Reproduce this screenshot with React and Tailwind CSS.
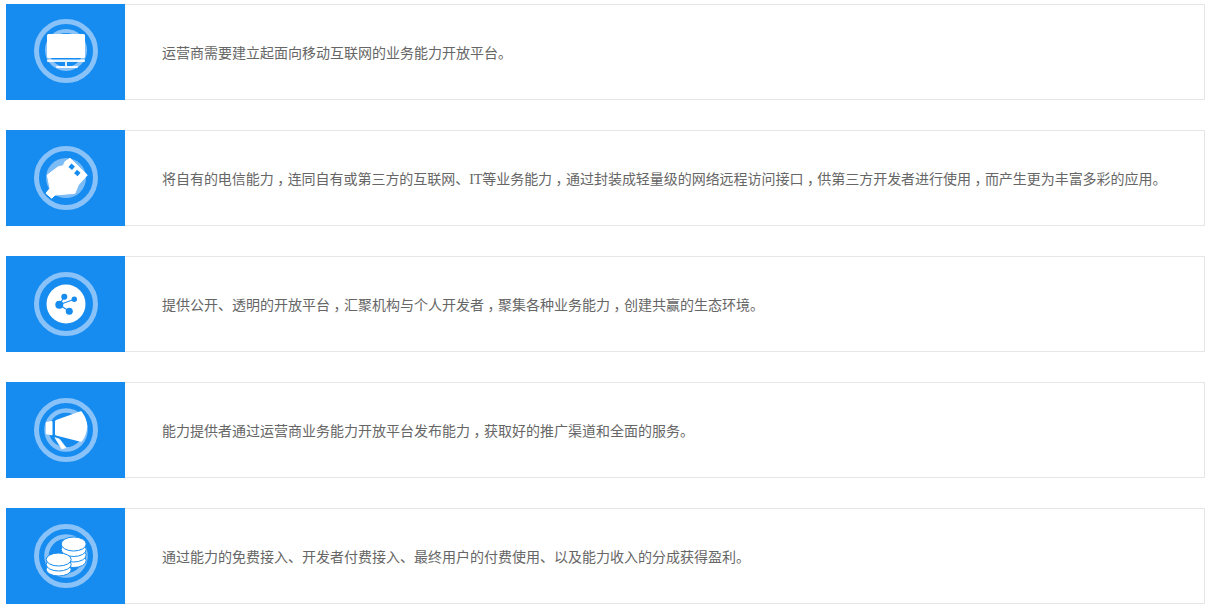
const RING = "#88c2f8";
const BLUE = "#168cf0";

function Ring({ children }) {
  return (
    <svg width="70" height="70" viewBox="0 0 70 70" className="block">
      <circle cx="35" cy="35" r="29.500" fill="none" stroke={RING} strokeWidth="5" />
      {children}
    </svg>
  );
}

const Monitor = () => (
  <Ring>
    <circle cx="35" cy="34" r="19" fill="none" stroke={RING} strokeWidth="4" />
    <path d="M16 19.500q0-1.500 1.500-1.500h35q1.500 0 1.500 1.500v21q0 1.500-1.500 1.500h-35q-1.500 0-1.500-1.500z" fill="#fff" />
    <rect x="16" y="43.500" width="38" height="2.500" rx="1" fill="#fff" opacity="0.9" />
    <rect x="34" y="46" width="2" height="4" fill="#fff" opacity="0.85" />
    <rect x="25" y="50" width="22" height="2" rx="1" fill="#fff" opacity="0.9" />
  </Ring>
);

const Plug = () => (
  <Ring>
    <circle cx="35" cy="35" r="20" fill="#7bbcf7" />
    <path d="M39 15.300L56.300 32 47.300 42 44 50.300 24 52 20.700 55.300 15 50.300 19 45.300 16.300 32 27.300 23.700 32.300 22.700 34 18.700z" fill="#fff" stroke="#fff" strokeWidth="1" strokeLinejoin="round" />
    <rect x="-2.300" y="-2.300" width="4.600" height="4.600" fill={BLUE} transform="translate(40.700 23.700) rotate(40)" />
    <rect x="-2.300" y="-2.300" width="4.600" height="4.600" fill={BLUE} transform="translate(46.300 30) rotate(40)" />
  </Ring>
);

const Share = () => (
  <Ring>
    <circle cx="35" cy="35" r="19.500" fill="#fff" />
    <g stroke={BLUE} strokeWidth="1.200">
      <path d="M28.300 35.700L33.300 27.700M28.300 35.700L43.300 30.300M28.300 35.700L38.300 42.300" />
    </g>
    <g fill={BLUE}>
      <circle cx="33.300" cy="27.700" r="3" />
      <circle cx="43.300" cy="30.300" r="2.700" />
      <circle cx="28.300" cy="35.700" r="4" />
      <circle cx="38.300" cy="42.300" r="3.500" />
    </g>
  </Ring>
);

const Horn = () => (
  <Ring>
    <circle cx="35" cy="35" r="19.500" fill="none" stroke={RING} strokeWidth="4.500" />
    <path d="M24 26.500q0-1 1-1.500L49.500 16.300q1-.3 1.500.7 5 7 5.300 14-.3 8-5.300 15.300-.5.700-1.500.4L25 40.500q-1-.3-1-1.500z" fill="#fff" />
    <path d="M15.500 27l5-1q1 0 1 1v12.500q0 1-1 .8l-5-1q-.7-.2-.7-1V28q0-.8.700-1z" fill="#fff" />
    <path d="M24 42.700l4.500 1.500 6.500 8.500-4.300 1z" fill="#fff" stroke="#fff" strokeWidth="0.800" strokeLinejoin="round" />
  </Ring>
);

function Stack({ x, y, rx, ry, layers, step }) {
  const items = [];
  for (let i = layers - 1; i >= 0; i--) {
    items.push(<ellipse key={i} cx={x} cy={y + i * step} rx={rx} ry={ry} fill="#fff" stroke={BLUE} strokeWidth="1" />);
  }
  return <g>{items}</g>;
}

const Coins = () => (
  <Ring>
    <circle cx="35" cy="35" r="19.500" fill="none" stroke={RING} strokeWidth="4.500" />
    <Stack x={42.700} y={23} rx={12.500} ry={7} layers={4} step={5.500} />
    <Stack x={27.700} y={38.500} rx={12.500} ry={6.500} layers={3} step={5} />
  </Ring>
);

const rows = [
  [Monitor, "运营商需要建立起面向移动互联网的业务能力开放平台。"],
  [Plug, "将自有的电信能力，连同自有或第三方的互联网、IT等业务能力，通过封装成轻量级的网络远程访问接口，供第三方开发者进行使用，而产生更为丰富多彩的应用。"],
  [Share, "提供公开、透明的开放平台，汇聚机构与个人开发者，聚集各种业务能力，创建共赢的生态环境。"],
  [Horn, "能力提供者通过运营商业务能力开放平台发布能力，获取好的推广渠道和全面的服务。"],
  [Coins, "通过能力的免费接入、开发者付费接入、最终用户的付费使用、以及能力收入的分成获得盈利。"],
];

function Copy({ text }) {
  const parts = text.split("，");
  return parts.flatMap((part, i) =>
    i === 0
      ? [part]
      : [<span key={i} className="px-[3.500px] [font-feature-settings:'halt']">，</span>, part]
  );
}

export default function App() {
  return (
    <div className="flex w-[1212px] h-[610px] flex-col gap-[30px] bg-white pt-1 pl-1.5 font-['Liberation_Serif','Noto_Sans_CJK_SC',serif]">
      {rows.map(([Icon, text], i) => (
        <div key={i} className="flex h-[96px] w-[1199px] border border-l-0 border-[#e6e6e6]">
          <div className={`-my-px flex h-[96px] w-[119px] shrink-0 items-center justify-center bg-[#168cf0] ${i === 0 ? "pb-0.5" : "pl-px"}`}>
            <Icon />
          </div>
          <p className={`pl-[37px] pt-[39px] text-sm leading-[20px] text-[#666666] ${i === 1 ? "tracking-[-0.04px]" : ""}`}><Copy text={text} /></p>
        </div>
      ))}
    </div>
  );
}
